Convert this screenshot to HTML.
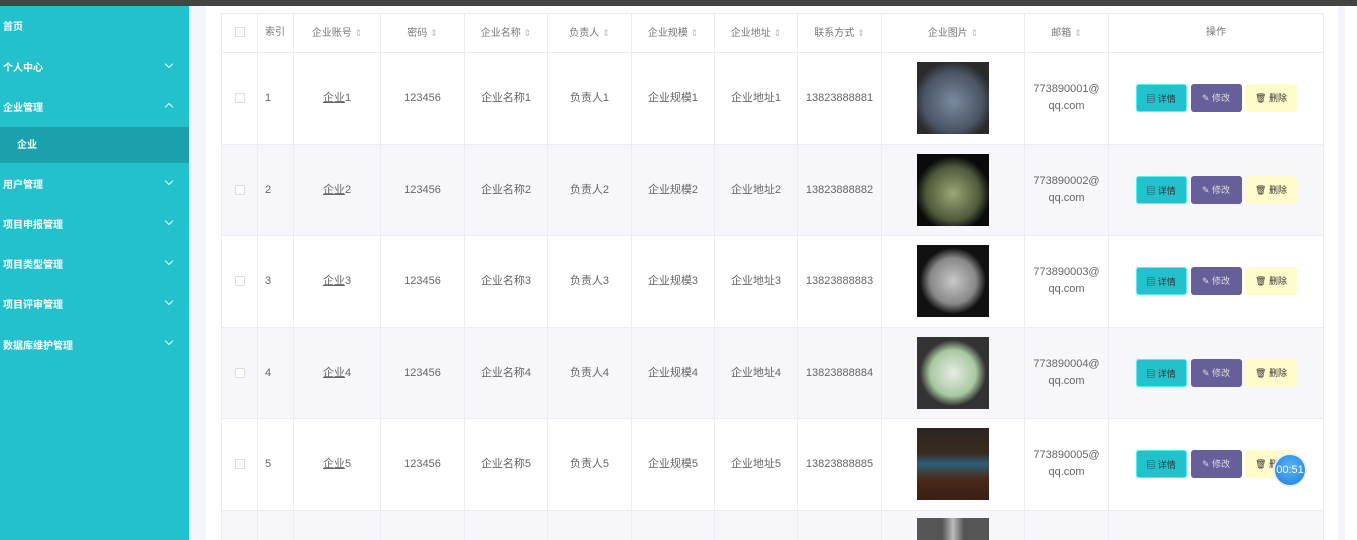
<!DOCTYPE html>
<html style="height:540px;overflow:hidden"><head><meta charset="utf-8"><style>
*{margin:0;padding:0;box-sizing:border-box}
body{width:1357px;height:540px;overflow:hidden;background:#f4f5fa;font-family:"Liberation Sans","Noto Sans CJK SC",sans-serif;position:relative}
.top{position:absolute;left:0;top:0;width:1357px;height:6px;background:#444}
.side{position:absolute;left:0;top:0;width:189px;height:540px;background:#23c1cc}
.mi{position:absolute;left:3px;color:#fff;font-size:10px;font-weight:bold;line-height:12px}
.chev{position:absolute;left:166px;width:6px;height:6px;border-right:1px solid #dff;border-bottom:1px solid #dff;transform:rotate(45deg)}
.up{transform:rotate(-135deg)}
.sub{position:absolute;left:0;top:127px;width:189px;height:36px;background:#1ba1ab}
.panel{position:absolute;left:206px;top:6px;width:1132px;height:534px;background:#fff}
.rg{position:absolute;left:1345px;top:6px;width:12px;height:534px;background:#fff}
.wrap{position:absolute;left:0;top:0;width:1357px;height:540px;overflow:hidden}
table{position:absolute;left:221px;top:13px;border-collapse:collapse;table-layout:fixed;width:1102px;font-size:11px;color:#666}
td,th{border:1px solid #ecedf3;text-align:center;vertical-align:middle;font-weight:normal;line-height:14px}
th{height:39px;color:#777;font-size:10px}
tbody tr{height:91.5px}
tbody tr.last{height:31px}
tbody tr:nth-child(even){background:#f6f6fb}
.cb{display:inline-block;width:10px;height:10px;border:1px solid #ddd;background:#fff;border-radius:1px;vertical-align:middle}
.l{text-align:left;padding-left:7px}
.s{color:#bbb;font-size:9px;margin-left:3px}
u{color:#666}
.img{display:inline-block;width:72px;height:72px;vertical-align:middle}
.b{display:inline-block;width:51px;height:28px;line-height:28px;border-radius:3px;font-size:9px;margin:0 2px;color:#333;vertical-align:middle}
.b1{background:#22c1cc;border:1px solid #5ee}
.b2{background:#675f9a;color:#ddd}
.b3{background:#fffccc}
.timer{position:absolute;left:1273px;top:453px;width:34px;height:34px;border-radius:50%;background:radial-gradient(circle at 50% 40%,#5ab2f5,#1e7fe0);border:2px solid #e6f0fa;color:#fff;font-size:11px;line-height:30px;text-align:center}
</style></head><body>
<div class="wrap">
<div class="side">
<div class="mi" style="top:22px">首页</div>
<div class="mi" style="top:63px">个人中心</div><div class="chev" style="top:61px"></div>
<div class="mi" style="top:103px">企业管理</div><div class="chev up" style="top:104px"></div>
<div class="sub"></div><div class="mi" style="top:140px;left:17px">企业</div>
<div class="mi" style="top:180px">用户管理</div><div class="chev" style="top:178px"></div>
<div class="mi" style="top:220px">项目申报管理</div><div class="chev" style="top:218px"></div>
<div class="mi" style="top:260px">项目类型管理</div><div class="chev" style="top:258px"></div>
<div class="mi" style="top:300px">项目评审管理</div><div class="chev" style="top:298px"></div>
<div class="mi" style="top:341px">数据库维护管理</div><div class="chev" style="top:338px"></div>
</div>
<div class="top"></div>
<div class="panel"></div><div class="rg"></div>
<table>
<colgroup><col style="width:36px"><col style="width:36px"><col style="width:87px"><col style="width:84px"><col style="width:83px"><col style="width:84px"><col style="width:83px"><col style="width:83px"><col style="width:84px"><col style="width:143px"><col style="width:84px"><col style="width:215px"></colgroup>
<thead><tr><th><span class="cb"></span></th><th class="l">索引</th><th>企业账号<span class="s">⇕</span></th><th>密码<span class="s">⇕</span></th><th>企业名称<span class="s">⇕</span></th><th>负责人<span class="s">⇕</span></th><th>企业规模<span class="s">⇕</span></th><th>企业地址<span class="s">⇕</span></th><th>联系方式<span class="s">⇕</span></th><th>企业图片<span class="s">⇕</span></th><th>邮箱<span class="s">⇕</span></th><th>操作</th></tr></thead>
<tbody>
<tr><td><span class="cb"></span></td><td class="l">1</td><td><u>企业</u>1</td><td>123456</td><td>企业名称1</td><td>负责人1</td><td>企业规模1</td><td>企业地址1</td><td>13823888881</td><td><span class="img" style="background:radial-gradient(circle at 50% 55%,#7a8aa0,#4a5565 55%,#2a2a2a 75%)"></span></td><td style="line-height:17px">773890001@<br>qq.com</td><td><span class="b b1">▤ 详情</span><span class="b b2">✎ 修改</span><span class="b b3">🗑 删除</span></td></tr>
<tr><td><span class="cb"></span></td><td class="l">2</td><td><u>企业</u>2</td><td>123456</td><td>企业名称2</td><td>负责人2</td><td>企业规模2</td><td>企业地址2</td><td>13823888882</td><td><span class="img" style="background:radial-gradient(circle at 50% 55%,#9aa878,#4e5a3a 50%,#0a0a0a 70%)"></span></td><td style="line-height:17px">773890002@<br>qq.com</td><td><span class="b b1">▤ 详情</span><span class="b b2">✎ 修改</span><span class="b b3">🗑 删除</span></td></tr>
<tr><td><span class="cb"></span></td><td class="l">3</td><td><u>企业</u>3</td><td>123456</td><td>企业名称3</td><td>负责人3</td><td>企业规模3</td><td>企业地址3</td><td>13823888883</td><td><span class="img" style="background:radial-gradient(circle at 50% 50%,#c8c8c8,#888 45%,#111 65%)"></span></td><td style="line-height:17px">773890003@<br>qq.com</td><td><span class="b b1">▤ 详情</span><span class="b b2">✎ 修改</span><span class="b b3">🗑 删除</span></td></tr>
<tr><td><span class="cb"></span></td><td class="l">4</td><td><u>企业</u>4</td><td>123456</td><td>企业名称4</td><td>负责人4</td><td>企业规模4</td><td>企业地址4</td><td>13823888884</td><td><span class="img" style="background:radial-gradient(circle at 50% 50%,#e8ece4,#a8c8a0 45%,#333 65%)"></span></td><td style="line-height:17px">773890004@<br>qq.com</td><td><span class="b b1">▤ 详情</span><span class="b b2">✎ 修改</span><span class="b b3">🗑 删除</span></td></tr>
<tr><td><span class="cb"></span></td><td class="l">5</td><td><u>企业</u>5</td><td>123456</td><td>企业名称5</td><td>负责人5</td><td>企业规模5</td><td>企业地址5</td><td>13823888885</td><td><span class="img" style="background:linear-gradient(#2a2622,#3a2a20 35%,#2e5e78 50%,#4a2a1a 70%,#3a1e14)"></span></td><td style="line-height:17px">773890005@<br>qq.com</td><td><span class="b b1">▤ 详情</span><span class="b b2">✎ 修改</span><span class="b b3">🗑 删除</span></td></tr>
<tr class="last"><td></td><td></td><td></td><td></td><td></td><td></td><td></td><td></td><td></td><td style="vertical-align:top;padding-top:7px"><span class="img" style="height:24px;background:linear-gradient(90deg,#555 35%,#bbb 50%,#555 65%)"></span></td><td></td><td></td></tr>
</tbody></table>
<div class="timer">00:51</div>
</div>
</body></html>
